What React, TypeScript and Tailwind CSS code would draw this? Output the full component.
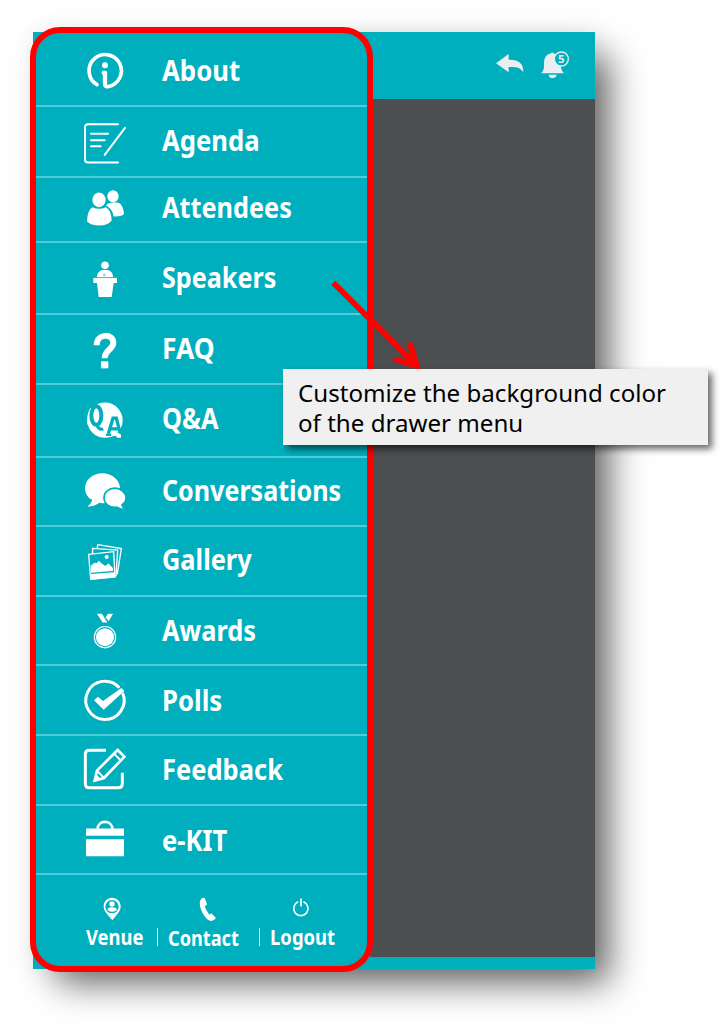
import type { ReactNode } from "react";

type Item = {
  label: string;
  row: string;
  text: string;
  viewBox: string;
  icon: ReactNode;
};

const line = {
  fill: "none",
  stroke: "currentColor",
  strokeLinecap: "round" as const,
  strokeLinejoin: "round" as const,
};

const items: Item[] = [
  {
    label: "About",
    row: "h-[74px]",
    text: "pt-px scale-x-[0.89]",
    viewBox: "183 75 144 144",
    icon: (
      <>
        <path {...line} strokeWidth="11" d="M231 194A48.500 48.500 0 1 1 264 200Q254 202 254 190V158" />
        <circle cx="255" cy="136" r="9" fill="currentColor" />
        <path {...line} strokeWidth="11" d="M250 158H256V192" />
      </>
    ),
  },
  {
    label: "Agenda",
    row: "h-[71px]",
    text: "pb-1 scale-x-[0.885]",
    viewBox: "183 292.5 144 144",
    icon: (
      <>
        <path {...line} strokeWidth="6" d="M294 311H204Q195 311 195 320V417Q195 426 204 426H294" />
        <path {...line} strokeWidth="6" d="M213 340H264M213 359H254M213 377H242M315 322L254 403" />
      </>
    ),
  },
  {
    label: "Attendees",
    row: "h-[65px]",
    text: "pb-[5px] scale-x-[0.872]",
    viewBox: "183 496.5 144 144",
    icon: (
      <g fill="currentColor">
        <ellipse cx="279" cy="527" rx="17" ry="18" />
        <path d="M263 550Q282 541 300 549Q310 558 312 580Q307 589 281 588Q278 566 258 555Z" />
        <ellipse cx="237" cy="538" rx="24" ry="26" fill="#00afbe" />
        <ellipse cx="237" cy="538" rx="20" ry="22" />
        <path d="M217 560Q238 570 257 560Q274 568 275 600Q263 615 238 615Q213 615 201 602Q202 569 217 560Z" />
      </g>
    ),
  },
  {
    label: "Speakers",
    row: "h-[72px]",
    text: "pb-[3px] scale-x-[0.867]",
    viewBox: "183 42 144 144",
    icon: (
      <g fill="currentColor">
        <circle cx="255" cy="76" r="11.5" />
        <path d="M230 112Q232 92 248 90H262Q278 92 280 112Z" />
        <path d="M220 114H291V129H281L275 171H236L231 129H220Z" />
        <path d="M220 113H291" fill="none" stroke="#4cc3cd" strokeWidth="2" />
        <circle cx="253" cy="105" r="4" fill="#7fd5de" />
      </g>
    ),
  },
  {
    label: "FAQ",
    row: "h-[70px]",
    text: "pb-[3px] scale-x-[0.91]",
    viewBox: "183 255 144 144",
    icon: (
      <>
        <path
          fill="none"
          stroke="currentColor"
          strokeWidth="18"
          d="M230 316C230 279 280 280 280 308C280 328 254 330 254 355"
        />
        <path fill="currentColor" d="M243 364H265V385H243Z" />
      </>
    ),
  },
  {
    label: "Q&A",
    row: "h-[73px]",
    text: "pb-[5px] scale-x-[0.872]",
    viewBox: "183 469.5 144 144",
    icon: (
      <>
        <circle cx="255" cy="539" r="53" fill="currentColor" />
        <g fill="none" stroke="#00afbe">
          <ellipse cx="229" cy="525" rx="15" ry="28" strokeWidth="12" />
          <path d="M230 552Q236 569 250 566" strokeWidth="9" />
          <path d="M265 580L279 533H289L301 580M270 565H296" strokeWidth="10" />
          <path d="M258 583H274M291 583H308" strokeWidth="7" />
        </g>
        <path d="M203 552Q201 520 212 503" fill="none" stroke="currentColor" strokeWidth="3" />
        <path d="M274 578L288 574L303 582V592H292L287 586L274 588Z" fill="currentColor" />
      </>
    ),
  },
  {
    label: "Conversations",
    row: "h-[69px]",
    text: "pb-[3px] scale-x-[0.865]",
    viewBox: "183 37.5 144 144",
    icon: (
      <g fill="currentColor">
        <path d="M247 53C276 53 300 73 300 98C300 124 276 143 247 143L238 142C228 150 216 154 202 153C212 146 216 139 216 133C202 125 195 112 195 98C195 73 218 53 247 53Z" />
        <path
          stroke="#00afbe"
          strokeWidth="5"
          d="M284 98C303 98 318 111 318 127C318 136 313 144 306 148C306 153 311 157 317 161C306 162 297 160 291 155C269 159 252 144 252 127C252 110 267 98 284 98Z"
        />
      </g>
    ),
  },
  {
    label: "Gallery",
    row: "h-[70px]",
    text: "pb-[4px] scale-x-[0.875]",
    viewBox: "183 246 144 144",
    icon: (
      <>
        <g fill="#00afbe" stroke="currentColor" strokeWidth="4">
          <path d="M233 269L304 281L292 356L225 344Z" />
          <path d="M218 280L293 285L288 362L216 357Z" />
          <path d="M206 298L281 290L285 366L212 373Z" />
        </g>
        <path fill="currentColor" d="M212 357L285 352V367L212 374Z" />
        <path fill="currentColor" d="M213 353V332L223 323L230 325L236 317L246 326L257 333L265 325L279 340V348Z" />
        <circle cx="260" cy="306" r="6" fill="currentColor" />
      </>
    ),
  },
  {
    label: "Awards",
    row: "h-[69px]",
    text: "pb-px scale-x-[0.875]",
    viewBox: "183 454.5 144 144",
    icon: (
      <>
        <path fill="currentColor" d="M231 475H246L262 501H248ZM264 475H279L266 497L257 485Z" />
        <circle cx="255" cy="545" r="32" fill="none" stroke="currentColor" strokeWidth="3.5" />
        <circle cx="255" cy="545" r="27" fill="currentColor" />
      </>
    ),
  },
  {
    label: "Polls",
    row: "h-[70px]",
    text: "scale-x-[0.885]",
    viewBox: "183 48 144 144",
    icon: (
      <>
        <path {...line} strokeLinecap="butt" strokeWidth="9" d="M298 83A57.500 57.500 0 1 0 308 99" />
        <path fill="currentColor" d="M222 121L234 110L249 123L304 84L313 93L251 149Z" />
      </>
    ),
  },
  {
    label: "Feedback",
    row: "h-[70px]",
    text: "pb-0.5 scale-x-[0.88]",
    viewBox: "183 258 144 144",
    icon: (
      <>
        <path
          {...line}
          strokeLinecap="butt"
          strokeWidth="9"
          d="M258 271H208Q196 271 196 283V371Q196 383 208 383H294Q307 383 307 371V338"
        />
        <path {...line} strokeLinejoin="miter" strokeWidth="8" d="M293 270L313 290L252 354L224 362L231 332Z" />
        <path {...line} strokeWidth="6" d="M231 332L252 354M282 281L302 301" />
        <path fill="currentColor" d="M229 343L242 357L222 364Z" />
      </>
    ),
  },
  {
    label: "e-KIT",
    row: "h-[69px]",
    text: "pt-px scale-x-[0.885]",
    viewBox: "183 466.5 144 144",
    icon: (
      <>
        <path fill="currentColor" d="M198 504H312V526H198ZM198 536H312V587H198Z" />
        <path fill="none" stroke="currentColor" strokeWidth="8" d="M233 506C233 477 277 477 277 506" />
      </>
    ),
  },
];

function MenuRow({ item }: { item: Item }) {
  return (
    <li className={`flex items-center border-b-2 border-[#50cbdb] pl-[45px] ${item.row}`}>
      <svg className="size-12 shrink-0" viewBox={item.viewBox}>
        {item.icon}
      </svg>
      <span
        className={`ml-[33px] origin-left text-[29px] leading-9 font-bold whitespace-nowrap ${item.text}`}
      >
        {item.label}
      </span>
    </li>
  );
}

function DrawerFooter() {
  return (
    <div className="flex pt-[21px] text-[21px] leading-6 font-bold">
      <div className="ml-[50px] flex w-[57px] flex-col items-start">
        <svg className="ml-[14px] h-[26px] w-6" viewBox="240 93 72 78">
          <path
            fill="currentColor"
            fillRule="evenodd"
            d="M276 98C291 98 302 110 302 124C302 140 290 149 277 166C264 149 251 140 251 124C251 110 262 98 276 98ZM276 105A20 20 0 1 0 276 145A20 20 0 1 0 276 105Z"
          />
          <circle cx="276" cy="117" r="8" fill="currentColor" />
          <path fill="currentColor" d="M262 134Q264 127 276 127Q289 127 291 134Q276 147 262 134Z" />
        </svg>
        <span className="mt-[3px] origin-left scale-x-[0.875]">Venue</span>
      </div>
      <div className="mt-8 ml-[14px] h-[18px] w-px bg-white" />
      <div className="ml-[10px] flex w-[72px] flex-col items-start">
        <svg className="ml-[28px] h-[26px] w-6" viewBox="528 93 72 78">
          <path
            fill="currentColor"
            d="M540 108Q543 98 554 98L561 118Q560 121 554 124Q558 137 568 149L574 145L588 159Q582 168 573 168Q560 167 548 145Q537 123 540 108Z"
          />
        </svg>
        <span className="mt-1 origin-left scale-x-[0.865]">Contact</span>
      </div>
      <div className="mt-8 ml-[19px] h-[18px] w-px bg-white" />
      <div className="ml-[10px] flex w-[65px] flex-col items-start">
        <svg className="ml-[19px] h-[26px] w-6" viewBox="807 93 72 78">
          <path {...line} strokeWidth="5" d="M833 111A21.500 21.500 0 1 0 852 111M843 102V122" />
        </svg>
        <span className="mt-[3px] origin-left scale-x-[0.88]">Logout</span>
      </div>
    </div>
  );
}

function Header() {
  return (
    <header className="flex h-[67px] bg-[#00afbe] text-[#e9eef0]">
      <svg className="mt-4 ml-[122px] h-9 w-[84px]" viewBox="396 84 252 108">
        <path
          fill="currentColor"
          d="M408 130L446 102V119C476 118 491 131 490 156C480 143 470 140 446 141V157Z"
        />
        <path
          fill="currentColor"
          d="M543 160C552 153 552 144 552 130C552 113 560 102 571 101C571 97 582 97 583 101C598 105 602 117 602 130C602 144 604 153 612 160ZM566 164H590Q588 174 577 174Q567 174 566 164Z"
        />
        <circle cx="604" cy="117" r="21" fill="#00afbe" stroke="currentColor" strokeWidth="4" />
        <text x="604" y="129" textAnchor="middle" fontSize="34" fontWeight="700" fill="currentColor">
          5
        </text>
      </svg>
    </header>
  );
}

export default function App() {
  return (
    <div className="relative h-[1034px] w-[721px] overflow-hidden bg-white pt-8 pl-[33px] font-['Noto_Sans',sans-serif]">
      <div className="flex h-[937px] w-[562px] bg-[#4d4e50] shadow-[19px_19px_34px_-5px_rgba(0,0,0,0.6),0_0_24px_rgba(0,0,0,0.08)]">
        <nav className="w-[337px] shrink-0 bg-[#00afbe] px-[3px] pt-px text-white">
          <ul>
            {items.map((item) => (
              <MenuRow key={item.label} item={item} />
            ))}
          </ul>
          <DrawerFooter />
        </nav>
        <main className="flex grow flex-col">
          <Header />
          <div className="grow" />
          <div className="h-3 bg-[#00afbe]" />
        </main>
      </div>

      <div className="absolute top-[27px] left-[30px] h-[945px] w-[343px] rounded-[30px] border-[6px] border-[#ff0000]" />

      <svg className="absolute top-[275px] left-[330px] h-[97px] w-[95px]" viewBox="180 45 285 291">
        <path fill="none" stroke="#ff0000" strokeWidth="17" d="M190 68L435 313" />
        <path
          fill="#ff0000"
          d="M453 331L376 306Q366 302 369 295Q373 289 383 292L409 299L421 287L412 257Q411 248 419 246Q427 244 430 253Z"
        />
      </svg>

      <div className="absolute top-[369px] left-[283px] h-[76px] w-[425px] bg-[#f0f0f0] pt-[9px] pl-[15px] text-[24px] leading-[30px] text-black shadow-[4px_4px_7px_rgba(0,0,0,0.6)]">
        <p className="w-fit origin-left scale-x-[1.005] whitespace-nowrap">Customize the background color</p>
        <p className="w-fit origin-left scale-x-[1.005] whitespace-nowrap">of the drawer menu</p>
      </div>
    </div>
  );
}
